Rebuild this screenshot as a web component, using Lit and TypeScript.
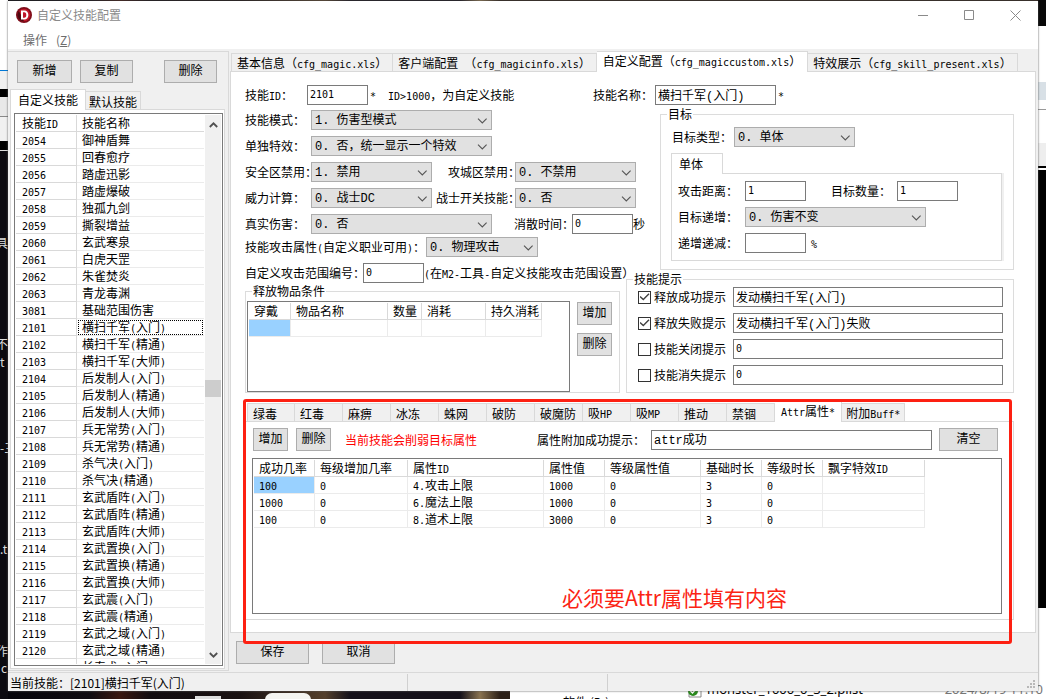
import { LitElement, html, css } from "lit";
import { customElement } from "lit/decorators.js";
import { classMap } from "lit/directives/class-map.js";
import { styleMap } from "lit/directives/style-map.js";

type Column = { title: string; width: number };

/* Latin runs take half the width of a Chinese character, as in the system bitmap face. */
const t = (text: string) =>
  text
    .split(/([\x20-\x7e]+)/)
    .filter((part) => part)
    .map((part) => (/^[\x20-\x7e]/.test(part) ? html`<span class="en">${part}</span>` : part));

const SKILLS: [string, string][] = [
  ["2054", "御神盾舞"],
  ["2055", "回春愈疗"],
  ["2056", "踏虚迅影"],
  ["2057", "踏虚爆破"],
  ["2058", "独孤九剑"],
  ["2059", "撕裂增益"],
  ["2060", "玄武寒泉"],
  ["2061", "白虎天罡"],
  ["2062", "朱雀焚炎"],
  ["2063", "青龙毒渊"],
  ["3081", "基础范围伤害"],
  ["2101", "横扫千军(入门)"],
  ["2102", "横扫千军(精通)"],
  ["2103", "横扫千军(大师)"],
  ["2104", "后发制人(入门)"],
  ["2105", "后发制人(精通)"],
  ["2106", "后发制人(大师)"],
  ["2107", "兵无常势(入门)"],
  ["2108", "兵无常势(精通)"],
  ["2109", "杀气决(入门)"],
  ["2110", "杀气决(精通)"],
  ["2111", "玄武盾阵(入门)"],
  ["2112", "玄武盾阵(精通)"],
  ["2113", "玄武盾阵(大师)"],
  ["2114", "玄武置换(入门)"],
  ["2115", "玄武置换(精通)"],
  ["2116", "玄武置换(大师)"],
  ["2117", "玄武震(入门)"],
  ["2118", "玄武震(精通)"],
  ["2119", "玄武之域(入门)"],
  ["2120", "玄武之域(精通)"],
  ["2121", "长春术(入门)"],
];

const SKILL_COLUMNS: Column[] = [
  { title: "技能ID", width: 61 },
  { title: "技能名称", width: 127 },
];

const ITEM_COLUMNS: Column[] = [
  { title: "穿戴", width: 42 },
  { title: "物品名称", width: 97 },
  { title: "数量", width: 34 },
  { title: "消耗", width: 64 },
  { title: "持久消耗", width: 56 },
];

const ATTR_COLUMNS: Column[] = [
  { title: "成功几率", width: 61 },
  { title: "每级增加几率", width: 93 },
  { title: "属性ID", width: 136 },
  { title: "属性值", width: 61 },
  { title: "等级属性值", width: 96 },
  { title: "基础时长", width: 61 },
  { title: "等级时长", width: 61 },
  { title: "飘字特效ID", width: 102 },
];

const ATTR_ROWS = [
  ["100", "0", "4.攻击上限", "1000", "0", "3", "0", ""],
  ["1000", "0", "6.魔法上限", "1000", "0", "3", "0", ""],
  ["100", "0", "8.道术上限", "3000", "0", "3", "0", ""],
];

const MAIN_TABS = [
  "基本信息（cfg_magic.xls）",
  "客户端配置 （cfg_magicinfo.xls）",
  "自定义配置（cfg_magiccustom.xls）",
  "特效展示（cfg_skill_present.xls）",
];

const EFFECT_TABS = [
  "绿毒", "红毒", "麻痹", "冰冻", "蛛网", "破防", "破魔防",
  "吸HP", "吸MP", "推动", "禁锢", "Attr属性*", "附加Buff*",
];

const HINTS = [
  { id: "hint-ok", label: "释放成功提示", value: "发动横扫千军(入门)", on: true },
  { id: "hint-fail", label: "释放失败提示", value: "发动横扫千军(入门)失败", on: true },
  { id: "hint-close", label: "技能关闭提示", value: "0", on: false },
  { id: "hint-end", label: "技能消失提示", value: "0", on: false },
];

@customElement("app-root")
export class AppRoot extends LitElement {
  static styles = css`
    :host {
      display: block;
      box-sizing: border-box;
      height: 100vh;
      position: relative;
      overflow: hidden;
      padding: 1px 8px 8px;
      background: #15100f;
      color: #000;
      font: 12px/16px "Noto Sans CJK SC", sans-serif;
    }
    * {
      box-sizing: border-box;
    }
    .en {
      font: 10px/12px "DejaVu Sans Mono", monospace;
      white-space: pre;
    }
    button,
    input,
    select {
      font: 12px/16px "Liberation Mono", "Noto Sans CJK SC", monospace;
      color: #000;
      margin: 0;
      border-radius: 0;
      outline: none;
    }
    label {
      white-space: nowrap;
    }

    /* what shows of the desktop round the window */
    .desk {
      position: absolute;
      inset: 0;
      overflow: hidden;
      background: linear-gradient(
        90deg, #05040a 0, #100c12 90px, #3a1812 120px, #120c10 150px, #1a1212 240px,
        #54402c 325px, #15111a 350px, #15111a 460px, #8a7350 480px, #2c2018 500px
      );
    }
    .desk-left {
      position: absolute;
      inset: 0 auto 0 0;
      width: 8px;
      overflow: hidden;
      color: #ddd;
      background: linear-gradient(
        #fff 0 70px, #0078d7 70px 71px, #f0f0f0 71px 89px, #000 89px 97px, #e8e8e8 97px 116px,
        #888 116px 117px, #f0f0f0 117px 141px, #000 141px 150px, #ddd 150px 151px, #0c0a10 151px
      );
    }
    .desk-right {
      position: absolute;
      inset: 0 0 0 auto;
      width: 8px;
      background: linear-gradient(
        #080808 0 26px, #fff 26px 82px, #d8e0e6 82px 100px, #fff 100px 109px, #999 109px 110px,
        #fff 110px 143px, #eee 143px 166px, #000 166px 168px, #fff 168px 170px, #000 170px 608px,
        #fff 608px
      );
    }
    .desk-bottom {
      position: absolute;
      inset: auto 0 0 510px;
      height: 12px;
      background: #fff;
    }
    .desk-shape {
      position: absolute;
      bottom: -9px;
      width: 46px;
      height: 15px;
      border-radius: 7px;
      background: #f4f4f0;
      left: 265px;
    }
    .desk-shape.file {
      left: 195px;
      width: 26px;
      height: 12px;
      border-radius: 0;
      background: #ddd;
    }
    .desk-word {
      position: absolute;
      white-space: nowrap;
    }
    .desk-word.drive { left: 563px; top: 694px; }
    .desk-word.file-name { left: 707px; top: 681px; font: 13px/16px "Noto Sans", sans-serif; }
    .desk-word.file-date { right: 3px; top: 681px; color: #777; font: 13px/16px "Noto Sans", sans-serif; }
    .desk-word.w1 { left: -4px; top: 235px; }
    .desk-word.w2 { left: -4px; top: 336px; }
    .desk-word.w3 { left: 0; top: 354px; }
    .desk-word.w4 { left: 0; top: 541px; }
    .desk-word.w5 { left: -4px; top: 643px; }
    .desk-word.w6 { left: 1px; top: 660px; }
    .desk-word.w7 { left: 0; top: 440px; }
    .desk-tick { position: absolute; left: 688px; top: 686px; }

    .window {
      position: relative;
      height: 100%;
      display: flex;
      flex-direction: column;
      background: #f0f0f0;
      box-shadow: 0 0 2px #555;
    }
    .caption {
      display: flex;
      align-items: center;
      height: 28px;
      padding-left: 8px;
      background: #fff;
      color: #8a8a8a;
    }
    .caption .name {
      flex: 1;
      padding-left: 5px;
    }
    .caption button {
      display: flex;
      align-items: center;
      justify-content: center;
      width: 46px;
      height: 28px;
      padding: 0;
      border: 0;
      background: none;
    }
    .menu {
      display: flex;
      height: 20px;
      padding-left: 15px;
      background: #fff;
    }
    .menu button {
      font: 12px/16px "Noto Sans CJK SC", sans-serif;
      color: #6d6d6d;
      border: 0;
      background: none;
      padding: 3px 0 0;
      display: flex;
      gap: 9px;
    }

    .client {
      flex: 1;
      min-height: 0;
      display: flex;
      gap: 1px;
      padding: 2px 2px 1px 0;
    }
    .side {
      width: 221px;
      flex: none;
      display: flex;
      flex-direction: column;
      border: solid #d9d9d9;
      border-width: 1px 1px 1px 0;
      padding: 8px 3px 1px 2px;
    }
    .side-tools {
      display: grid;
      grid-template-columns: 55px 53px 53px;
      column-gap: 8px;
      padding: 0 7px 6px;
    }
    .side-tools .btn:last-child {
      margin-left: 23px;
      width: 53px;
    }
    .btn {
      height: 23px;
      padding: 0;
      border: 1px solid #adadad;
      background: #e1e1e1;
      text-align: center;
      white-space: nowrap;
    }

    .tabs {
      display: flex;
      align-items: flex-end;
      height: 20px;
    }
    .tab {
      height: 18px;
      padding: 2px 5px 0;
      border: solid #d9d9d9;
      border-width: 1px 1px 0 0;
      background: #f0f0f0;
      line-height: 14px;
      text-align: left;
      white-space: nowrap;
      font-family: "Noto Sans CJK SC", sans-serif;
    }
    .tab:first-child {
      border-left-width: 1px;
    }
    .tab.on {
      position: relative;
      z-index: 1;
      height: 21px;
      margin-bottom: -1px;
      padding: 2px 6px 3px;
      background: #fff;
    }
    .effects .tab {
      min-width: 48px;
    }
    .side .tab {
      padding: 2px 3px 0;
    }
    .side .tab.on {
      padding: 2px 7px 3px;
    }
    .target .tab.on {
      padding: 2px 19px 3px 7px;
    }
    .effects .tab:last-child {
      padding: 2px 4px 0;
    }

    .page {
      border: 1px solid #d9d9d9;
      background: #fff;
    }
    .side .page {
      flex: 1;
      min-height: 0;
      padding: 3px 1px 2px 3px;
      display: flex;
    }

    .list {
      position: relative;
      border: 1px solid #7a7a7a;
      background: #fff;
      padding: 1px;
      overflow: hidden;
    }
    .skills {
      flex: 1;
      display: flex;
      align-items: stretch;
    }
    .skills .rows {
      flex: 1;
      overflow: hidden;
    }
    .bar {
      width: 16px;
      flex: none;
      background: #f0f0f0;
      display: flex;
      flex-direction: column;
      align-items: center;
    }
    .bar svg {
      flex: none;
      margin: 7px 0 6px;
    }
    .bar .thumb {
      width: 16px;
      height: 17px;
      background: #cdcdcd;
    }
    .bar .before { flex: 247; }
    .bar .after { flex: 250; }

    table {
      table-layout: fixed;
      border-collapse: separate;
      border-spacing: 0;
      width: 0;
    }
    th,
    td {
      height: 17px;
      padding: 0 0 0 5px;
      border: solid #ebebeb;
      border-width: 0 1px 1px 0;
      font-weight: 400;
      text-align: left;
      line-height: 16px;
      white-space: nowrap;
      overflow: hidden;
    }
    th {
      border-color: #d9d9d9;
    }
    .skills td:first-child {
      border-color: #d9d9d9;
    }
    .skills th:first-child,
    .skills td:first-child {
      padding-left: 6px;
    }
    .skills th:last-child,
    .skills td:last-child {
      border-right: 0;
    }
    td.focus {
      outline: 1px dotted #000;
      outline-offset: -2px;
    }
    td.picked {
      background: #99d1ff;
    }

    .main {
      flex: 1;
      min-width: 0;
      display: flex;
      flex-direction: column;
    }
    .main > .tabs {
      padding-left: 1px;
    }
    .main > .page {
      flex: 1;
      min-height: 0;
      display: flex;
      flex-direction: column;
      padding: 13px 21px 12px 14px;
    }
    .line {
      display: flex;
      align-items: center;
      height: 20px;
    }
    .head label:first-child {
      width: 62px;
    }
    .box {
      height: 20px;
      width: 61px;
      flex: none;
      border: 1px solid #7a7a7a;
      background: #fff;
      padding: 0 2px 1px;
    }
    .box.num {
      font: 10px/16px "DejaVu Sans Mono", monospace;
    }
    .box.name {
      width: 121px;
    }
    .note {
      flex: 1;
      padding-left: 2px;
      white-space: pre;
    }
    .head .note:last-child {
      flex: 0 1 238px;
    }
    .head .title {
      width: 62px;
    }
    .cols {
      display: flex;
      margin-top: 5px;
    }
    .form {
      width: 381px;
      flex: none;
      display: flex;
      flex-direction: column;
    }
    .stack {
      display: flex;
      flex-direction: column;
      gap: 6px;
    }
    .stack + .stack {
      margin-top: 3px;
    }
    .form label {
      width: 66px;
      flex: none;
    }
    .form label.long {
      width: 181px;
    }
    .form label.range {
      width: 118px;
    }
    .duo {
      display: grid;
      grid-template-columns: 66px 121px 83px 121px;
      align-items: center;
      height: 20px;
    }
    .duo label {
      width: auto;
    }
    .duo .inner {
      justify-self: end;
      margin-right: -5px;
    }
    .pair {
      display: grid;
      grid-template-columns: 66px 181px 80px 61px 12px;
      align-items: center;
      height: 20px;
    }
    .pair .inner {
      padding-left: 22px;
      width: auto;
    }

    .pick {
      position: relative;
      display: block;
      flex: none;
      width: 121px;
      height: 20px;
    }
    .pick.wide { width: 181px; }
    .pick.mid { width: 112px; }
    .pick select {
      appearance: none;
      display: block;
      width: 100%;
      height: 20px;
      padding: 2px 16px 0 3px;
      border: 1px solid #adadad;
      background: #e1e1e1;
    }
    .pick svg {
      position: absolute;
      right: 4px;
      top: 8px;
      pointer-events: none;
    }

    fieldset {
      min-width: 0;
      margin: 0;
      border: 1px solid #dcdcdc;
      padding: 0;
    }
    legend {
      height: 12px;
      line-height: 12px;
      margin-left: 6px;
      padding: 0 1px;
    }
    .items {
      width: 375px;
      height: 108px;
      margin-top: 2px;
    }
    .items .inside {
      display: flex;
      gap: 7px;
      height: 95px;
      padding: 4px 7px 0 1px;
    }
    .items .list {
      flex: 1;
      height: 91px;
    }
    .items .acts {
      display: flex;
      flex-direction: column;
      gap: 8px;
      padding-top: 1px;
    }
    .items .btn,
    .attr-tools .small {
      width: 35px;
    }

    .aside {
      flex: 1;
      min-width: 0;
      display: flex;
      flex-direction: column;
      margin-top: -2px;
    }
    .target {
      margin-left: 34px;
    }
    .target .inside {
      padding: 7px 11px 8px 10px;
    }
    .target .inside > .line {
      padding-left: 1px;
      margin-bottom: 6px;
    }
    .target .inside > .line label {
      width: 62px;
    }
    .target .page {
      padding: 7px 6px;
      box-shadow: 2px 0 0 #f0f0f0;
    }
    .target .page label {
      width: 67px;
      flex: none;
    }
    .target .page .gap {
      margin-left: 25px;
      width: 66px;
    }
    .target .percent {
      padding-left: 5px;
    }
    .hints {
      margin-top: 3px;
    }
    .hints .inside {
      padding: 2px 10px 7px 11px;
    }
    .hints label {
      width: 82px;
      padding-left: 3px;
      flex: none;
    }
    .hints .box {
      flex: 1;
      min-width: 0;
    }
    .check {
      appearance: none;
      width: 13px;
      height: 13px;
      flex: none;
      border: 1px solid #333;
      background: #fff;
      display: grid;
      place-items: center;
    }
    .check:checked::before {
      content: "";
      width: 10px;
      height: 10px;
      background: #444;
      clip-path: polygon(0 50%, 10% 40%, 38% 66%, 90% 12%, 100% 22%, 38% 86%);
    }

    .effects {
      position: relative;
      flex: 1;
      min-height: 0;
      display: flex;
      flex-direction: column;
      margin-top: 8px;
    }
    .effects > .page {
      flex: 1;
      min-height: 0;
      display: flex;
      flex-direction: column;
      gap: 7px;
      padding: 6px 11px 5px 6px;
    }
    .effects .tabs {
      padding-left: 2px;
    }
    .attr-tools {
      display: flex;
      align-items: center;
      padding: 0 4px 0 1px;
    }
    .attr-tools .small + .small {
      margin-left: 8px;
    }
    .attr-tools .warn {
      color: #f00;
      flex: 0 0 192px;
      padding-left: 14px;
    }
    .attr-tools label {
      width: 114px;
      margin-left: 14px;
      flex: none;
    }
    .attr-tools .box {
      flex: 1;
      min-width: 0;
    }
    .attr-tools .clear {
      width: 59px;
      margin-left: 7px;
    }
    .effects .list {
      flex: 1;
      min-height: 0;
    }
    .callout {
      position: absolute;
      left: 309px;
      bottom: 4px;
      margin: 0;
      color: #fb2414;
      font-size: 21px;
      line-height: 24px;
      white-space: nowrap;
    }
    .mark {
      position: absolute;
      inset: -2px 2px -24px -2px;
      z-index: 2;
      border: 3px solid #fd2012;
      border-radius: 3px;
      pointer-events: none;
    }

    .confirm {
      display: flex;
      gap: 13px;
      padding: 8px 6px 7px;
    }
    .confirm .btn {
      width: 73px;
    }
    .status {
      position: relative;
      display: flex;
      height: 19px;
      border-top: 1px solid #d9d9d9;
      line-height: 18px;
    }
    .status span {
      padding-left: 2px;
      margin-top: 1px;
      border-right: 1px solid #d0d0d0;
      width: 200px;
      white-space: nowrap;
    }
    .status span:first-child {
      width: 400px;
    }
    .status svg {
      position: absolute;
      right: 2px;
      bottom: 2px;
    }
  `;

  private chevron() {
    return html`<svg width="11" height="6" viewBox="0 0 11 6" aria-hidden="true">
      <path d="M1 .7 5.3 5 9.6 .7" fill="none" stroke="#555" stroke-width="1.1" />
    </svg>`;
  }

  private pick(id: string, value: string, size = "") {
    return html`<span class="pick ${size}">
      <select id=${id}><option>${value}</option></select>${this.chevron()}
    </span>`;
  }

  private tabs(names: string[], current: number) {
    return html`<div class="tabs" role="tablist">
      ${names.map(
        (name, i) => html`<button
          class=${classMap({ tab: true, on: i === current })}
          role="tab"
          aria-selected=${i === current ? "true" : "false"}
        >${t(name)}</button>`
      )}
    </div>`;
  }

  private grid(columns: Column[], rows: string[][], picked: boolean, focusRow = -1) {
    return html`<table>
      <colgroup>
        ${columns.map((c) => html`<col style=${styleMap({ width: `${c.width}px` })} />`)}
      </colgroup>
      <thead>
        <tr>${columns.map((c) => html`<th>${t(c.title)}</th>`)}</tr>
      </thead>
      <tbody>
        ${rows.map(
          (row, r) => html`<tr>
            ${row.map(
              (cell, c) => html`<td
                class=${classMap({ picked: picked && r === 0 && c === 0, focus: r === focusRow && c === 1 })}
              >${t(cell)}</td>`
            )}
          </tr>`
        )}
      </tbody>
    </table>`;
  }

  private desktop() {
    return html`<div class="desk" aria-hidden="true">
      <div class="desk-bottom"></div>
      <div class="desk-shape file"></div>
      <div class="desk-shape"></div>
      <span class="desk-word drive">软件 (D:)</span>
      <svg class="desk-tick" width="14" height="12" viewBox="0 0 14 12">
        <path d="M1 0h12v11H1z" fill="#fff" stroke="#888" />
        <circle cx="5" cy="5" r="5" fill="#2a8a1e" />
        <path d="m2.5 5 2 2 3.500-4" fill="none" stroke="#fff" stroke-width="1.500" />
      </svg>
      <span class="desk-word file-name">monster_1000_0_3_2.plist</span>
      <div class="desk-left">
        <span class="desk-word w1">具</span>
        <span class="desk-word w2">不</span>
        <span class="desk-word w3">t</span>
        <span class="desk-word w7">-三</span>
        <span class="desk-word w4">.t</span>
        <span class="desk-word w5">作</span>
        <span class="desk-word w6">c</span>
      </div>
      <div class="desk-right"></div>
      <span class="desk-word file-date">2024/8/19 11:10</span>
    </div>`;
  }

  private caption() {
    return html`<header class="caption">
        <svg width="16" height="16" viewBox="0 0 16 16" aria-hidden="true">
          <circle cx="8" cy="8" r="8" fill="#7d0d19" />
          <circle cx="8" cy="8" r="6.300" fill="#c01529" />
          <path d="M8 14.300A6.300 6.300 0 0 1 3 4z" fill="#4c0810" />
          <path
            d="M5 3.500h3.400c2.400 0 4 1.800 4 4.500s-1.600 4.500-4 4.500H5zM7 5.300v5.400h1.200c1.400 0 2.100-1 2.100-2.700S9.600 5.300 8.200 5.300z"
            fill="#fff"
            fill-rule="evenodd"
          />
        </svg>
        <span class="name">自定义技能配置</span>
        <button aria-label="最小化">
          <svg width="11" height="11"><path d="M0 5.500h10" stroke="#8a8a8a" /></svg>
        </button>
        <button aria-label="最大化">
          <svg width="11" height="11"><path d="M.5.5h9v9h-9z" fill="none" stroke="#8a8a8a" /></svg>
        </button>
        <button aria-label="关闭">
          <svg width="11" height="11"><path d="m.5.5 10 10m0-10-10 10" stroke="#8a8a8a" /></svg>
        </button>
      </header>
      <nav class="menu"><button><span>操作</span><span>(<u>Z</u>)</span></button></nav>`;
  }

  private side() {
    return html`<aside class="side">
      <div class="side-tools">
        <button class="btn">新增</button>
        <button class="btn">复制</button>
        <button class="btn">删除</button>
      </div>
      ${this.tabs(["自定义技能", "默认技能"], 0)}
      <div class="page">
        <div class="list skills">
          <div class="rows">
            ${this.grid(SKILL_COLUMNS, SKILLS, false, SKILLS.findIndex((s) => s[0] === "2101"))}
          </div>
          <div class="bar">
            <svg width="9" height="6" viewBox="0 0 9 6">
              <path d="M.8 5 4.500 1.300 8.200 5" fill="none" stroke="#505050" stroke-width="1.800" />
            </svg>
            <div class="before"></div>
            <div class="thumb"></div>
            <div class="after"></div>
            <svg width="9" height="6" viewBox="0 0 9 6">
              <path d="M.8 1 4.500 4.700 8.200 1" fill="none" stroke="#505050" stroke-width="1.800" />
            </svg>
          </div>
        </div>
      </div>
    </aside>`;
  }

  private form() {
    return html`<div class="form">
      <div class="stack">
        <div class="line"><label for="mode">技能模式：</label>${this.pick("mode", "1. 伤害型模式", "wide")}</div>
        <div class="line"><label for="solo">单独特效：</label>${this.pick("solo", "0. 否，统一显示一个特效", "wide")}</div>
        <div class="duo">
          <label for="safe">安全区禁用：</label>${this.pick("safe", "1. 禁用")}
          <label class="inner" for="siege">攻城区禁用：</label>${this.pick("siege", "0. 不禁用")}
        </div>
        <div class="duo">
          <label for="power">威力计算：</label>${this.pick("power", "0. 战士DC")}
          <label class="inner" for="toggle">战士开关技能：</label>${this.pick("toggle", "0. 否")}
        </div>
        <div class="pair">
          <label for="real">真实伤害：</label>${this.pick("real", "0. 否", "wide")}
          <label class="inner" for="fade">消散时间：</label><input class="box num" id="fade" value="0" /><span>秒</span>
        </div>
      </div>
      <div class="stack">
        <div class="line">
          <label class="long" for="kind">${t("技能攻击属性(自定义职业可用)：")}</label>${this.pick("kind", "0. 物理攻击", "mid")}
        </div>
        <div class="line">
          <label class="range" for="range">自定义攻击范围编号：</label>
          <input class="box num" id="range" value="0" />
          <label for="range">${t("(在M2-工具-自定义技能攻击范围设置）")}</label>
        </div>
      </div>
      <fieldset class="items">
        <legend>释放物品条件</legend>
        <div class="inside">
          <div class="list">${this.grid(ITEM_COLUMNS, [["", "", "", "", ""]], true)}</div>
          <div class="acts">
            <button class="btn">增加</button>
            <button class="btn">删除</button>
          </div>
        </div>
      </fieldset>
    </div>`;
  }

  private aside() {
    return html`<div class="aside">
      <fieldset class="target">
        <legend>目标</legend>
        <div class="inside">
          <div class="line"><label for="target">目标类型：</label>${this.pick("target", "0. 单体")}</div>
          ${this.tabs(["单体"], 0)}
          <div class="page stack">
            <div class="line">
              <label for="reach">攻击距离：</label><input class="box num" id="reach" value="1" />
              <label class="gap" for="count">目标数量：</label><input class="box num" id="count" value="1" />
            </div>
            <div class="line"><label for="growth">目标递增：</label>${this.pick("growth", "0. 伤害不变", "wide")}</div>
            <div class="line">
              <label for="step">递增递减：</label><input class="box num" id="step" /><span class="percent">${t("%")}</span>
            </div>
          </div>
        </div>
      </fieldset>
      <fieldset class="hints">
        <legend>技能提示</legend>
        <div class="inside stack">
          ${HINTS.map(
            (h) => html`<div class="line">
              <input class="check" type="checkbox" id=${h.id} ?checked=${h.on} />
              <label for=${h.id}>${h.label}</label>
              <input class="box ${/^\d+$/.test(h.value) ? "num" : ""}" aria-label=${h.label} value=${h.value} />
            </div>`
          )}
        </div>
      </fieldset>
    </div>`;
  }

  private effects() {
    return html`<section class="effects">
      ${this.tabs(EFFECT_TABS, 11)}
      <div class="page">
        <div class="attr-tools">
          <button class="btn small">增加</button>
          <button class="btn small">删除</button>
          <span class="warn">当前技能会削弱目标属性</span>
          <label for="attr-hint">属性附加成功提示：</label>
          <input class="box" id="attr-hint" value="attr成功" />
          <button class="btn clear">清空</button>
        </div>
        <div class="list">
          ${this.grid(ATTR_COLUMNS, ATTR_ROWS, true)}
          <p class="callout">必须要Attr属性填有内容</p>
        </div>
      </div>
      <div class="mark"></div>
    </section>`;
  }

  render() {
    return html`${this.desktop()}
      <main class="window">
        ${this.caption()}
        <div class="client">
          ${this.side()}
          <div class="main">
            ${this.tabs(MAIN_TABS, 2)}
            <div class="page">
              <div class="line head">
                <label for="skill-id">${t("技能ID：")}</label>
                <input class="box num" id="skill-id" value="2101" />
                <span class="note">${t("*  ID>1000，为自定义技能")}</span>
                <label class="title" for="skill-name">技能名称：</label>
                <input class="box name" id="skill-name" value="横扫千军(入门)" />
                <span class="note">${t("*")}</span>
              </div>
              <div class="cols">${this.form()}${this.aside()}</div>
              ${this.effects()}
            </div>
            <div class="confirm">
              <button class="btn">保存</button>
              <button class="btn">取消</button>
            </div>
          </div>
        </div>
        <footer class="status">
          <span>当前技能：[2101]横扫千军(入门)</span><span></span>
          <svg width="9" height="9" viewBox="0 0 9 9" fill="#b8b8b8" aria-hidden="true">
            <path d="M6 0h2v2H6zM3 3h2v2H3zM6 3h2v2H6zM0 6h2v2H0zM3 6h2v2H3zM6 6h2v2H6z" />
          </svg>
        </footer>
      </main>`;
  }
}
